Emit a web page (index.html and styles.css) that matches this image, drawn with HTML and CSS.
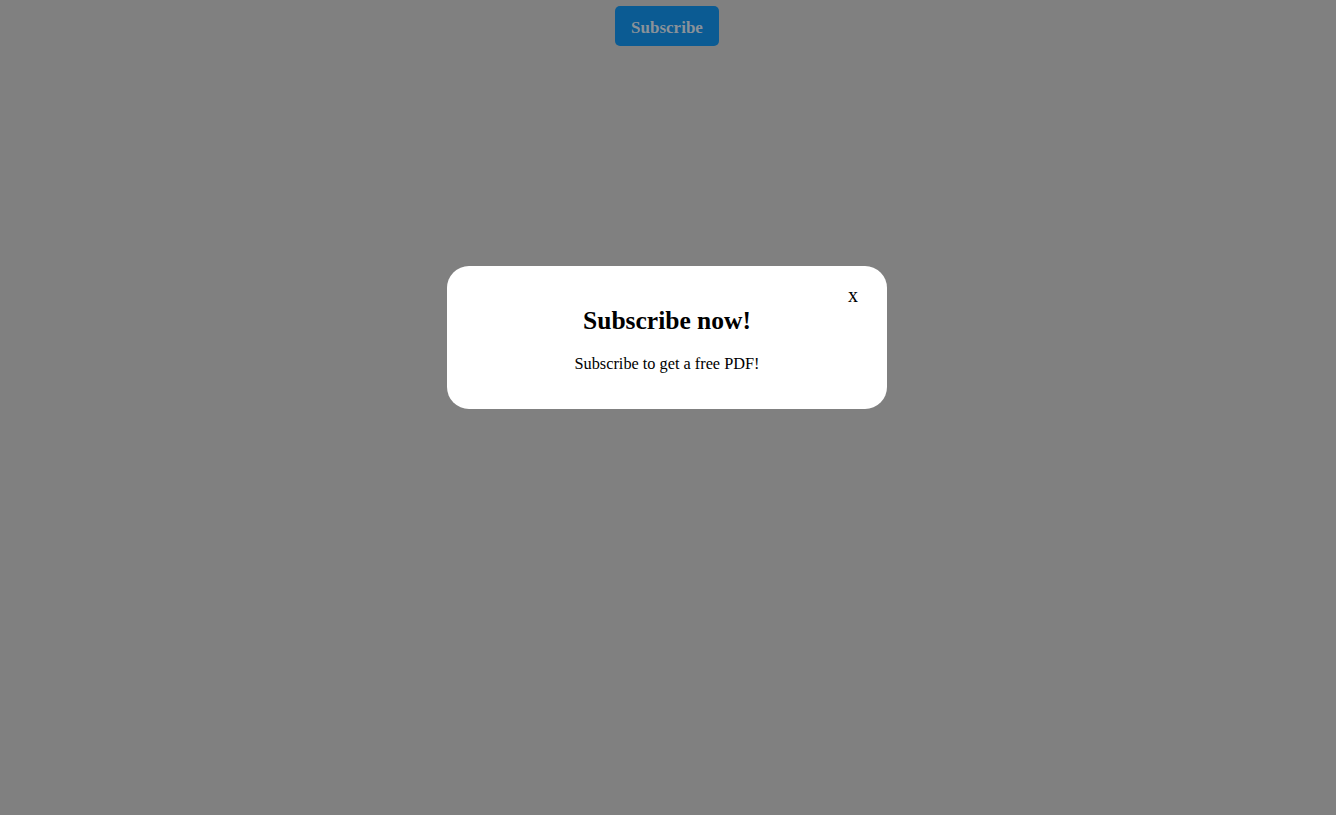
FILE: index.html
```html
<!DOCTYPE html>
<html>
<head>
<meta charset="utf-8">
<link rel="stylesheet" href="styles.css">
</head>
<body>
<div class="top">
  <button class="sub-btn">Subscribe</button>
</div>
<div class="overlay">
  <div class="modal">
    <span class="close">x</span>
    <h2 class="title">Subscribe now!</h2>
    <p class="text">Subscribe to get a free PDF!</p>
  </div>
</div>
</body>
</html>
```
FILE: styles.css
```css
html, body {
  margin: 0;
  padding: 0;
  height: 100%;
}
body {
  background: #808080;
  font-family: "Liberation Serif", serif;
}
.top {
  display: flex;
  justify-content: center;
  padding-top: 6px;
  padding-right: 2px;
}
.sub-btn {
  width: 104px;
  height: 40px;
  border: none;
  border-radius: 5px;
  background: #0b5b93;
  color: #8a9299;
  font-family: "Liberation Serif", serif;
  font-weight: bold;
  font-size: 17px;
  padding: 3px 0 0;
}
.overlay {
  position: fixed;
  inset: 0;
  display: flex;
  justify-content: center;
  align-items: flex-start;
  padding-top: 266px;
  padding-right: 2px;
}
.modal {
  position: relative;
  width: 440px;
  height: 143px;
  box-sizing: border-box;
  background: #fff;
  border-radius: 22px;
  text-align: center;
  padding-top: 39px;
}
.close {
  position: absolute;
  top: 18px;
  right: 29px;
  font-size: 20px;
  color: #000;
}
.title {
  margin: 0;
  font-size: 25.5px;
  font-weight: bold;
  line-height: 32px;
  color: #000;
}
.text {
  margin: 17px 0 0;
  font-size: 16.3px;
  line-height: 20px;
  color: #000;
}
```
